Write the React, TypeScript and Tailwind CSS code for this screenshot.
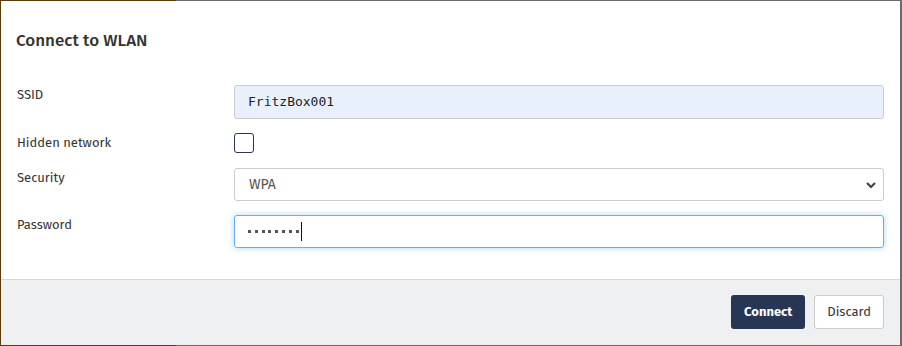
export default function App() {
  return (
    <div className="w-[902px] h-[346px] bg-[linear-gradient(to_right,#5b3a0c_176px,#6b6b6b_176px)] pt-px pl-px pr-[2px] pb-px font-['Fira_Sans','Open_Sans',sans-serif] text-[#333]">
      <div className="h-full bg-white flex flex-col">
        <div className="pt-[28px] pb-[22px] px-[15px]">
          <h3 className="text-[17px] leading-6 font-medium text-[#333]">Connect to WLAN</h3>
        </div>
        <div className="flex-1 px-[16px] pt-[10px] flex flex-col">
          <div className="flex items-start">
            <label className="w-[217px] pt-0 text-[13px] leading-5">SSID</label>
            <div className="flex-1 h-[34px] bg-[#e8f0fe] border border-[#ccc] rounded-[3px] flex items-center px-[13px] font-['DejaVu_Sans_Mono',monospace] text-[13px] text-[#222]">
              FritzBox001
            </div>
          </div>
          <div className="flex items-center mt-[14px]">
            <label className="w-[217px] text-[13px] leading-5">Hidden network</label>
            <div className="w-[20px] h-[20px] border border-[#2a3553] rounded-[3px] bg-white" />
          </div>
          <div className="flex items-start mt-[15px]">
            <label className="w-[217px] text-[13px] leading-5">Security</label>
            <div className="flex-1 h-[33px] border border-[#ccc] rounded-[3px] flex items-center justify-between pl-[14px] pr-[6px] text-[14px] text-[#555]">
              <span>WPA</span>
              <svg width="12" height="8" viewBox="0 0 12 8">
                <path d="M2 2l4 4 4-4" fill="none" stroke="#444" strokeWidth="2.2" />
              </svg>
            </div>
          </div>
          <div className="flex items-start mt-[14px]">
            <label className="w-[217px] text-[13px] leading-5">Password</label>
            <div className="flex-1 h-[33px] border border-[#66afe9] rounded-[3px] shadow-[0_0_6px_rgba(102,175,233,0.5)] flex items-center pl-[13px]">
              <div className="flex gap-[3.8px] items-center">
                {Array.from({ length: 8 }).map((_, i) => (
                  <span key={i} className="w-[3px] h-[3px] bg-[#555]" />
                ))}
              </div>
              <span className="w-px h-[19px] bg-[#111] ml-[2px]" />
            </div>
          </div>
        </div>
        <div className="h-[66px] border-t border-[#d6d6d6] bg-[#eff0f2] flex items-start justify-end gap-[9px] pt-[15px] px-[16px]">
          <button className="h-[34px] px-[13px] bg-[#283655] text-white font-bold text-[13px] rounded-[3px]">Connect</button>
          <button className="h-[34px] px-[12px] bg-white border border-[#ccc] text-[#333] text-[13px] rounded-[3px]">Discard</button>
        </div>
      </div>
    </div>
  )
}
